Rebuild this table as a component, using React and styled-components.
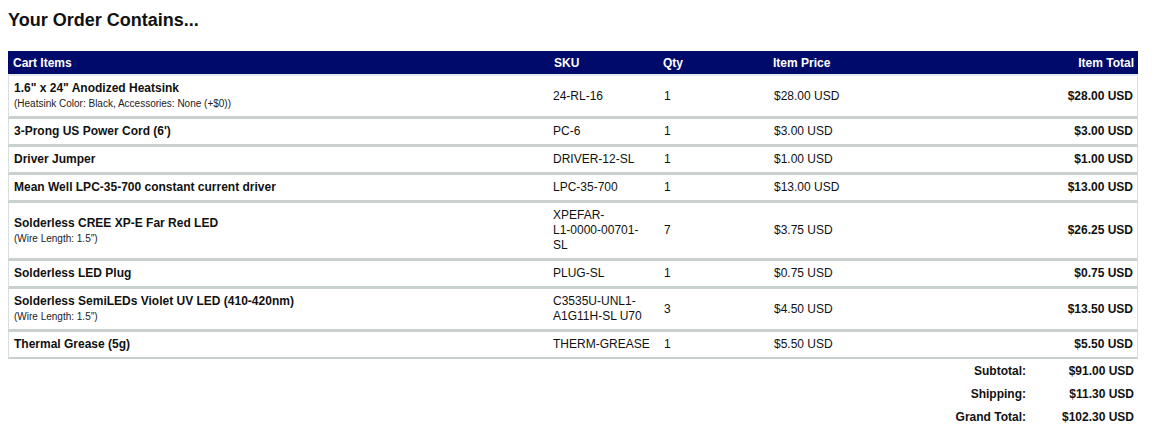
import React from "react";
import styled, { createGlobalStyle } from "styled-components";

const Global = createGlobalStyle`
  body {
    margin: 8px;
    background: #ffffff;
    font-family: "Liberation Sans", Arial, sans-serif;
    color: #111111;
  }
`;

const Page = styled.div`
  width: 1130px;
`;

const Title = styled.h1`
  margin: 0 0 20px 0;
  padding-top: 2px;
  font-size: 18px;
  line-height: 21px;
  font-weight: bold;
  color: #111;
`;

const COLS = "541px 109px 110px 1fr 1fr";

const HeaderRow = styled.div`
  display: grid;
  grid-template-columns: ${COLS};
  align-items: center;
  height: 23px;
  background: #000a6b;
  color: #ffffff;
  font-size: 12px;
  font-weight: bold;
  border-bottom: 2px solid #e4e9f0;
`;

const Row = styled.div`
  display: grid;
  grid-template-columns: ${COLS};
  align-items: center;
  padding: 5px 0;
  border-left: 1px solid #d9dfdf;
  border-right: 1px solid #d9dfdf;
  border-bottom: ${(p) => (p.$last ? "2px" : "3px")} solid #c8d0d0;
  font-size: 12px;
  line-height: 15px;
`;

const Cell = styled.div`
  padding: 0 ${(p) => (p.$right ? "4px" : "5px")} 0 5px;
  text-align: ${(p) => (p.$right ? "right" : "left")};
  font-weight: ${(p) => (p.$bold ? "bold" : "normal")};
`;

const SkuCell = styled.div`
  padding: 0 9px 0 3px;
`;

const HeadCell = styled(Cell)`
  font-weight: bold;
`;

const Name = styled.div`
  font-weight: bold;
`;

const Option = styled.div`
  font-size: 10px;
  line-height: 15px;
  color: #222;
`;

const Totals = styled.div`
  display: grid;
  grid-template-columns: 1fr 112px;
  grid-auto-rows: 23px;
  align-items: center;
  font-size: 12px;
  font-weight: bold;
`;

const TotalLabel = styled.div`
  text-align: right;
`;

const TotalValue = styled.div`
  text-align: right;
  padding-right: 4px;
`;

const WJ = "\u2060";

const items = [
  {
    name: '1.6" x 24" Anodized Heatsink',
    opt: "(Heatsink Color: Black, Accessories: None (+$0))",
    sku: "24-RL-16",
    qty: 1,
    price: "$28.00 USD",
    total: "$28.00 USD",
  },
  { name: "3-Prong US Power Cord (6')", sku: "PC-6", qty: 1, price: "$3.00 USD", total: "$3.00 USD" },
  { name: "Driver Jumper", sku: "DRIVER-12-SL", qty: 1, price: "$1.00 USD", total: "$1.00 USD" },
  {
    name: "Mean Well LPC-35-700 constant current driver",
    sku: "LPC-35-700",
    qty: 1,
    price: "$13.00 USD",
    total: "$13.00 USD",
  },
  {
    name: "Solderless CREE XP-E Far Red LED",
    opt: "(Wire Length: 1.5\u2033)",
    sku: `XPEFAR-L1-${WJ}0000-${WJ}00701-SL`,
    qty: 7,
    price: "$3.75 USD",
    total: "$26.25 USD",
  },
  { name: "Solderless LED Plug", sku: "PLUG-SL", qty: 1, price: "$0.75 USD", total: "$0.75 USD" },
  {
    name: "Solderless SemiLEDs Violet UV LED (410-420nm)",
    opt: "(Wire Length: 1.5\u2033)",
    sku: "C3535U-UNL1-A1G11H-SL U70",
    qty: 3,
    price: "$4.50 USD",
    total: "$13.50 USD",
  },
  { name: "Thermal Grease (5g)", sku: "THERM-GREASE", qty: 1, price: "$5.50 USD", total: "$5.50 USD" },
];

const totals = [
  ["Subtotal:", "$91.00 USD"],
  ["Shipping:", "$11.30 USD"],
  ["Grand Total:", "$102.30 USD"],
];

export default function App() {
  return (
    <Page>
      <Global />
      <Title>Your Order Contains...</Title>
      <HeaderRow>
        <HeadCell>Cart Items</HeadCell>
        <HeadCell>SKU</HeadCell>
        <HeadCell>Qty</HeadCell>
        <HeadCell>Item Price</HeadCell>
        <HeadCell $right>Item Total</HeadCell>
      </HeaderRow>
      {items.map((it, i) => (
        <Row key={i} $last={i === items.length - 1}>
          <Cell>
            <Name>{it.name}</Name>
            {it.opt && <Option>{it.opt}</Option>}
          </Cell>
          <SkuCell>{it.sku}</SkuCell>
          <Cell>{it.qty}</Cell>
          <Cell>{it.price}</Cell>
          <Cell $right $bold>
            {it.total}
          </Cell>
        </Row>
      ))}
      <Totals>
        {totals.map(([l, v]) => (
          <React.Fragment key={l}>
            <TotalLabel>{l}</TotalLabel>
            <TotalValue>{v}</TotalValue>
          </React.Fragment>
        ))}
      </Totals>
    </Page>
  );
}
